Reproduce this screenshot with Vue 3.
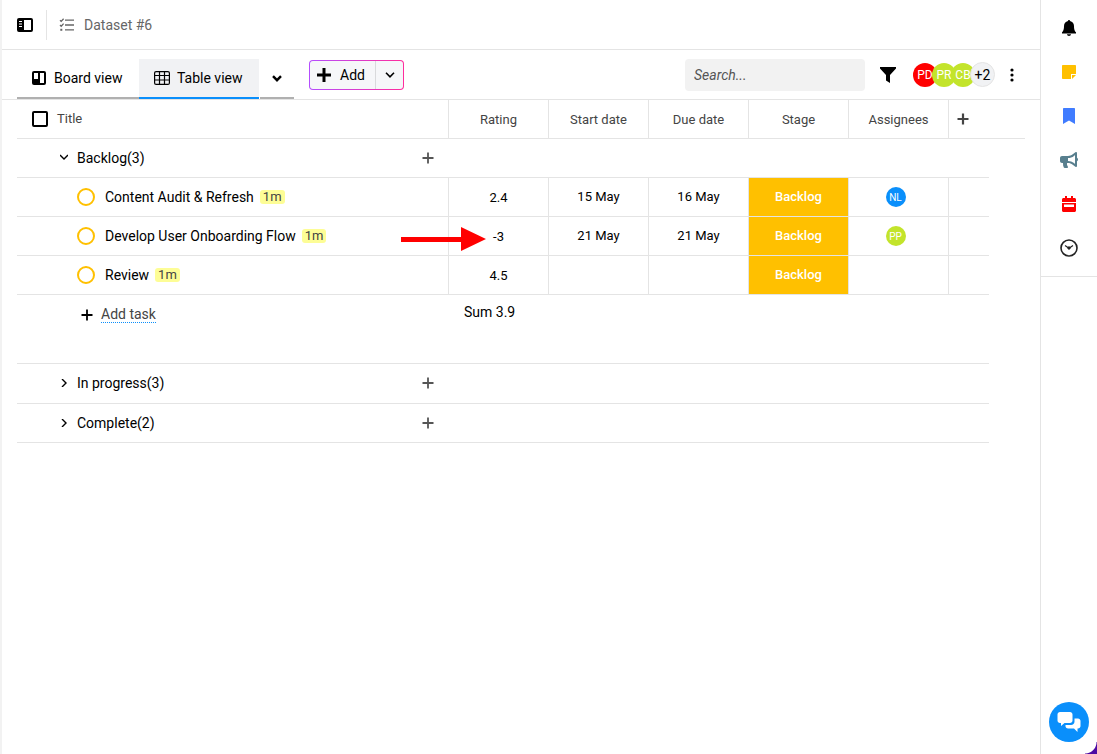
<script setup>
import {reactive, ref} from "vue"

const search = ref("")
const allChecked = ref(false)

const columns = ["Rating", "Start date", "Due date", "Stage", "Assignees"]

const people = [
  {name: "PD", tone: "red"},
  {name: "PR", tone: "lime"},
  {name: "CB", tone: "lime"},
]

const groups = reactive([
  {
    name: "Backlog",
    count: 3,
    open: true,
    sum: "3.9",
    tasks: [
      {title: "Content Audit & Refresh", age: "1m", rating: "2.4", start: "15 May", due: "16 May", stage: "Backlog", user: "NL", tone: "blue"},
      {title: "Develop User Onboarding Flow", age: "1m", rating: "-3", start: "21 May", due: "21 May", stage: "Backlog", user: "PP", tone: "lime", marked: true},
      {title: "Review", age: "1m", rating: "4.5", start: "", due: "", stage: "Backlog", user: ""},
    ]
  },
  {name: "In progress", count: 3, open: false, sum: "", tasks: []},
  {name: "Complete", count: 2, open: false, sum: "", tasks: []},
])

const toggle = (group) => {
  group.open = !group.open
}
</script>

<template>
  <div class="app">
    <main class="main">
      <header class="topbar">
        <button class="icon-btn topbar__menu" aria-label="Toggle sidebar">
          <svg width="16" height="14" viewBox="0 0 16 14">
            <rect x="1" y="1" width="14" height="12" rx="1" fill="none" stroke="#000" stroke-width="2"/>
            <path d="M1 1h6v12H1z" fill="#000"/>
            <path d="M2 3.5h3M2 6h3M2 8.5h3" stroke="#fff" stroke-width="1.2"/>
          </svg>
        </button>
        <div class="topbar__title">
          <svg width="16" height="14" viewBox="0 0 16 14" fill="none" stroke="#666" stroke-width="1.3">
            <path d="M6 2.2h9M6 7h9M6 11.8h9M1 2.2l1.2 1.2L4.6.8M1 7l1.2 1.2 2.4-2.6"/>
            <path d="M1.3 11.8h2" stroke-width="2"/>
          </svg>
          <h1>Dataset #6</h1>
        </div>
      </header>

      <div class="toolbar">
        <nav class="tabs">
          <button class="tab tab--board">
            <svg width="14" height="14" viewBox="0 0 14 14">
              <rect width="14" height="14" rx="2"/>
              <path d="M2 2h4v6H2zM8 2h4v10H8z" fill="#fff"/>
            </svg>
            Board view
          </button>
          <button class="tab tab--active">
            <svg width="16" height="14" viewBox="0 0 16 14" fill="none" stroke="#000" stroke-width="1.2">
              <rect x=".6" y=".6" width="14.8" height="12.8" rx="1.5"/>
              <path d="M1 4.5h14M1 9h14M5.5 1v12M10.5 1v12"/>
            </svg>
            Table view
          </button>
          <button class="tab tab--more" aria-label="More views">
            <svg width="10" height="7" viewBox="0 0 10 7"><path d="M1 1.2l4 4 4-4" fill="none" stroke="#000" stroke-width="2.4"/></svg>
          </button>
        </nav>

        <div class="add">
          <button class="add__main">
            <svg width="14" height="14" viewBox="0 0 14 14"><path d="M7 0v14M0 7h14" stroke="#000" stroke-width="3"/></svg>
            Add
          </button>
          <button class="add__more" aria-label="More add options">
            <svg width="10" height="6" viewBox="0 0 10 6"><path d="M1 .8l4 4 4-4" fill="none" stroke="#000" stroke-width="1.6"/></svg>
          </button>
        </div>

        <input v-model="search" class="search" type="text" placeholder="Search..." aria-label="Search"/>

        <button class="icon-btn toolbar__filter" aria-label="Filter">
          <svg width="16" height="16" viewBox="0 0 16 16"><path d="M0 0h16v1.5L10 8v8l-4-2.5V8L0 1.5z"/></svg>
        </button>

        <div class="people">
          <span v-for="item in people" :key="item.name" class="avatar" :class="`avatar--${item.tone}`">{{ item.name }}</span>
          <span class="avatar avatar--rest">+2</span>
        </div>

        <button class="icon-btn toolbar__dots" aria-label="More">
          <svg width="4" height="14" viewBox="0 0 4 14"><circle cx="2" cy="2" r="1.6"/><circle cx="2" cy="7" r="1.6"/><circle cx="2" cy="12" r="1.6"/></svg>
        </button>
      </div>

      <div class="board">
        <table class="table">
          <colgroup>
            <col/>
            <col v-for="col in columns" :key="col" class="col-field"/>
            <col class="col-plus"/>
            <col class="col-rest"/>
          </colgroup>
          <thead>
            <tr>
              <th>
                <label class="check">
                  <input v-model="allChecked" type="checkbox"/>
                  Title
                </label>
              </th>
              <th v-for="col in columns" :key="col" class="cell">{{ col }}</th>
              <th class="cell cell--plus" colspan="2">
                <button class="icon-btn" aria-label="Add column">
                  <svg width="12" height="12" viewBox="0 0 12 12"><path d="M6 .5v11M.5 6h11" stroke="#444" stroke-width="2.2"/></svg>
                </button>
              </th>
            </tr>
          </thead>

          <tbody v-for="group in groups" :key="group.name">
            <tr class="group">
              <td>
                <div class="group__head">
                  <button class="group__toggle" @click="toggle(group)">
                    <svg v-if="group.open" width="8" height="8" viewBox="0 0 8 8"><path d="M0 1l4 4 4-4" fill="none" stroke="#000" stroke-width="1.4"/></svg>
                    <svg v-else width="8" height="8" viewBox="0 0 8 8"><path d="M2 0l4 4-4 4" fill="none" stroke="#000" stroke-width="1.4"/></svg>
                    {{ group.name }}({{ group.count }})
                  </button>
                  <button class="icon-btn" aria-label="Add task to group">
                    <svg width="12" height="12" viewBox="0 0 12 12"><path d="M6 .5v11M.5 6h11" stroke="#555" stroke-width="1.8"/></svg>
                  </button>
                </div>
              </td>
              <td colspan="6"></td>
            </tr>

            <template v-if="group.open">
              <tr v-for="task in group.tasks" :key="task.title">
                <td class="table__task">
                  <div class="task">
                    <button class="task__ring" aria-label="Complete task"></button>
                    <span>{{ task.title }}</span>
                    <span class="task__age">{{ task.age }}</span>
                  </div>
                  <svg v-if="task.marked" class="pointer" width="85" height="24" viewBox="0 0 85 24">
                    <path d="M0 10h60V0l25 12-25 12V15H0z" fill="#f00"/>
                  </svg>
                </td>
                <td class="cell cell--rating">{{ task.rating }}</td>
                <td class="cell">{{ task.start }}</td>
                <td class="cell">{{ task.due }}</td>
                <td class="cell cell--stage">{{ task.stage }}</td>
                <td class="cell cell--user">
                  <span v-if="task.user" class="avatar avatar--small" :class="`avatar--${task.tone}`">{{ task.user }}</span>
                </td>
                <td class="cell"></td>
              </tr>
              <tr class="summary">
                <td>
                  <button class="add-task">
                    <svg width="12" height="12" viewBox="0 0 12 12"><path d="M6 .5v11M.5 6h11" stroke="#000" stroke-width="1.8"/></svg>
                    <span>Add task</span>
                  </button>
                </td>
                <td class="summary__sum">Sum {{ group.sum }}</td>
                <td colspan="5"></td>
              </tr>
            </template>
          </tbody>
        </table>
      </div>
    </main>

    <aside class="rail">
      <div class="rail__tools">
        <button class="icon-btn" aria-label="Notifications">
          <svg width="16" height="16" viewBox="0 0 16 16"><path d="M8 0c.7 0 1 .5 1 1.1 2.500.5 4 2.400 4 4.900 0 4 1 5.300 2 6.300v1.200H1v-1.200c1-1 2-2.300 2-6.300 0-2.500 1.500-4.400 4-4.900C7 .5 7.300 0 8 0zM6 14.300h4c0 1-.9 1.700-2 1.700s-2-.7-2-1.700z"/></svg>
        </button>
        <button class="icon-btn" aria-label="Notes">
          <svg width="16" height="16" viewBox="0 0 16 16"><path d="M1.800 1h12.400c.5 0 .8.3.8.8V10h-5v5H1.800c-.5 0-.8-.3-.8-.8V1.800c0-.5.3-.8.8-.8zM11 11h4l-4 4z" fill="#ffc000"/></svg>
        </button>
        <button class="icon-btn" aria-label="Bookmarks">
          <svg width="16" height="16" viewBox="0 0 16 16"><path d="M3 0h10c.6 0 1 .4 1 1v15l-6-3.500L2 16V1c0-.6.4-1 1-1z" fill="#407cff"/></svg>
        </button>
        <button class="icon-btn" aria-label="Announcements">
          <svg width="18" height="16" viewBox="0 0 18 16" fill="#587f8e"><path d="M18 7.500c0-.7-.4-1.400-1-1.700V1c0-.3-.2-1-1-1-.2 0-.4.1-.6.2l-2.700 2.100C11.400 3.400 9.700 4 8 4H2C.9 4 0 4.900 0 6v3c0 1.100.9 2 2 2h1c-.1 1.700.2 3.200.8 4.500.2.300.5.5.9.5H7c.8 0 1.300-.9.8-1.600-.8-1-1-2.200-.7-3.400H8c1.700 0 3.400.6 4.700 1.700l2.700 2.100c.2.100.4.2.6.2.8 0 1-.7 1-1V9.200c.6-.3 1-1 1-1.700zm-3 4.400l-1-.8C12.300 9.700 10.200 9 8 9V6c2.200 0 4.300-.7 6-2.100l1-.8z"/></svg>
        </button>
        <button class="icon-btn" aria-label="Calendar">
          <svg width="16" height="16" viewBox="0 0 16 16" fill="#f00"><path d="M4 0h2v2h4V0h2v2h1.500c.8 0 1.500.7 1.500 1.500V6H1V3.500C1 2.700 1.700 2 2.500 2H4zM1 7h14v7.500c0 .8-.7 1.500-1.500 1.500h-11C1.700 16 1 15.300 1 14.500zM3 8.500V11h10V8.500z" fill-rule="evenodd"/></svg>
        </button>
        <button class="icon-btn" aria-label="Time">
          <svg width="18" height="18" viewBox="0 0 18 18" fill="none" stroke="#222"><circle cx="9" cy="9" r="8" stroke-width="1.6"/><path d="M5 6.500l4 2.800 4-2.800" stroke-width="1.2"/><circle cx="9" cy="9" r="1.2" fill="#222"/></svg>
        </button>
      </div>
      <button class="chat" aria-label="Chat">
        <svg width="24" height="22" viewBox="0 0 24 22" fill="#fff">
          <path d="M3 1h10c1.400 0 2.500 1.100 2.500 2.500v6c0 1.400-1.100 2.500-2.500 2.500H7.500L4 15v-3H3C1.600 12 .5 10.900.5 9.500v-6C.5 2.100 1.600 1 3 1z"/>
          <path d="M17.500 7.500H21c1.400 0 2.500 1.100 2.500 2.500v5c0 1.400-1.100 2.500-2.500 2.500h-.5V21L17 17.500h-6c-1.200 0-2.200-.9-2.500-2V14H14c2 0 3.500-1.500 3.500-3.500z"/>
        </svg>
      </button>
    </aside>
    <div class="corner"></div>
  </div>
</template>

<style>
body {
  margin: 0;
  background: #fff;
}
</style>

<style scoped>
.app {
  display: flex;
  min-height: 100vh;
  box-sizing: border-box;
  border-left: 2px solid #f2f2f2;
  color: #000;
  font-family: Roboto, "Liberation Sans", sans-serif;
  font-size: 14px;
  line-height: 20px;
}

.app * {
  box-sizing: border-box;
}

button {
  padding: 0;
  border: 0;
  background: none;
  color: inherit;
  font: inherit;
  cursor: pointer;
}

svg {
  display: block;
  flex: none;
}

.icon-btn {
  display: flex;
  align-items: center;
  justify-content: center;
}

.main {
  flex: 1;
  min-width: 0;
}

.topbar {
  display: flex;
  align-items: center;
  height: 50px;
  padding-left: 15px;
  border-bottom: 1px solid #e4e4e4;
}

.topbar__menu {
  height: 30px;
}

.topbar__title {
  display: flex;
  align-items: center;
  gap: 9px;
  height: 30px;
  margin-left: 13px;
  padding-left: 12px;
  border-left: 1px solid #e4e4e4;
  color: #666;
}

.topbar__title h1 {
  margin: 0;
  font-size: 14px;
  font-weight: 400;
}

.toolbar {
  display: flex;
  align-items: center;
  height: 50px;
  padding: 0 26px 0 15px;
  border-bottom: 1px solid #e4e4e4;
}

.tabs {
  display: flex;
  align-self: flex-end;
}

.tab {
  display: flex;
  align-items: center;
  gap: 7px;
  width: 120px;
  height: 40px;
  padding-left: 15px;
  border-bottom: 2px solid #b0b0b0;
}

.tab--board {
  width: 122px;
  gap: 8px;
}

.tab--active {
  border-color: #0a8ffb;
  background: #f1f2f4;
}

.tab--more {
  width: 34px;
  margin-left: 1px;
  padding-left: 12px;
}

.add {
  display: flex;
  width: 95px;
  height: 30px;
  margin-left: 15px;
  border: 1px solid transparent;
  border-radius: 4px;
  background: linear-gradient(#f6f7f9, #f6f7f9) padding-box, linear-gradient(90deg, #b44dff, #ff2d9c) border-box;
}

.add__main {
  display: flex;
  flex: 1;
  align-items: center;
  gap: 9px;
  padding-left: 7px;
}

.add__more {
  display: flex;
  align-items: center;
  justify-content: center;
  width: 28px;
  border-left: 1px solid #d9dadc;
}

.search {
  width: 180px;
  height: 32px;
  margin-left: auto;
  padding: 0 9px;
  border: 0;
  border-radius: 4px;
  background: #f2f2f2;
  font: inherit;
}

.search::placeholder {
  color: #555;
  font-style: italic;
  opacity: 1;
}

.toolbar__filter {
  margin-left: 15px;
}

.people {
  display: flex;
  align-items: center;
  margin-left: 17px;
}

.avatar {
  display: flex;
  align-items: center;
  justify-content: center;
  width: 24px;
  height: 24px;
  border-radius: 50%;
  color: #fff;
  font-size: 12px;
}

.people .avatar + .avatar {
  margin-left: -5px;
}

.avatar--red {
  background: #f00;
}

.avatar--lime {
  background: #c3e42b;
}

.avatar--blue {
  background: #0a8ffb;
}

.people .avatar--rest {
  width: 25px;
  height: 25px;
  border: 1px solid #e4e4e4;
  background: #f1f2f4;
  color: #000;
  font-size: 14px;
}

.avatar--small {
  width: 20px;
  height: 20px;
  margin: 0 auto;
  padding-top: 1px;
  font-size: 10px;
}

.toolbar__dots {
  margin-left: 15px;
}

.board {
  padding: 0 15px;
}

.table {
  width: 100%;
  border-spacing: 0;
  table-layout: fixed;
}

.col-field {
  width: 100px;
}

.col-plus {
  width: 41px;
}

.col-rest {
  width: 36px;
}

.table th,
.table td {
  height: 39px;
  padding: 0;
  border-bottom: 1px solid #e4e4e4;
  text-align: left;
}

.table th {
  color: #444;
  font-size: 13px;
  font-weight: 400;
}

.table .cell {
  border-left: 1px solid #e4e4e4;
  font-size: 13px;
  text-align: center;
}

.table th.cell,
.table .cell--rating {
  padding-top: 1px;
}

.table th.cell--plus {
  padding: 0 0 0 8px;
}

.table .cell--stage {
  background: #ffc000;
  color: #fff;
  font-weight: 500;
}

.table .cell--user {
  padding-right: 6px;
}

.check {
  display: flex;
  align-items: center;
  gap: 9px;
  padding-left: 15px;
}

.check input {
  width: 16px;
  height: 16px;
  margin: 0;
  border: 2px solid #000;
  border-radius: 2px;
  appearance: none;
}

.check input:checked {
  background: #000;
}

.table tbody:nth-of-type(2) .group td {
  height: 40px;
  padding-bottom: 1px;
}

.group__head {
  display: flex;
  align-items: center;
  justify-content: space-between;
  padding: 0 14px 0 43px;
}

.group__toggle {
  display: flex;
  align-items: center;
  gap: 9px;
}

.table__task {
  position: relative;
}

.task {
  display: flex;
  align-items: center;
  padding-left: 60px;
}

.task__ring {
  width: 18px;
  height: 18px;
  margin-right: 10px;
  border: 2px solid #ffc000;
  border-radius: 50%;
}

.task__age {
  margin-left: 6px;
  padding: 0 3px;
  border-radius: 3px;
  background: #fdfd96;
  color: #444;
  font-size: 13px;
  line-height: 14px;
}

.pointer {
  position: absolute;
  top: 10px;
  right: -38px;
  z-index: 1;
}

.table .summary td {
  height: 69px;
  padding-top: 7px;
  vertical-align: top;
}

.add-task {
  display: flex;
  align-items: center;
  gap: 8px;
  padding: 4px 0 0 64px;
  color: #444;
}

.add-task span {
  border-bottom: 1px dotted #0a8ffb;
  line-height: 16px;
}

.table .summary__sum {
  padding-left: 16px;
  white-space: nowrap;
}

.rail {
  display: flex;
  flex-direction: column;
  justify-content: space-between;
  align-items: center;
  width: 57px;
  padding-bottom: 12px;
  border-left: 1px solid #e4e4e4;
}

.rail__tools {
  display: flex;
  flex-direction: column;
  align-self: stretch;
  align-items: center;
  gap: 26px;
  padding: 19px 0;
  border-bottom: 1px solid #e4e4e4;
}

.rail__tools .icon-btn {
  width: 18px;
  height: 18px;
}

.chat {
  display: flex;
  align-items: center;
  justify-content: center;
  width: 40px;
  height: 40px;
  border-radius: 50%;
  background: #0a8ffb;
}

/* rounded corner of the window frame */
.corner {
  position: fixed;
  right: 0;
  bottom: 0;
  width: 12px;
  height: 12px;
  background: radial-gradient(circle at 0 0, transparent 11px, #4b0aa3 12px);
}
</style>
